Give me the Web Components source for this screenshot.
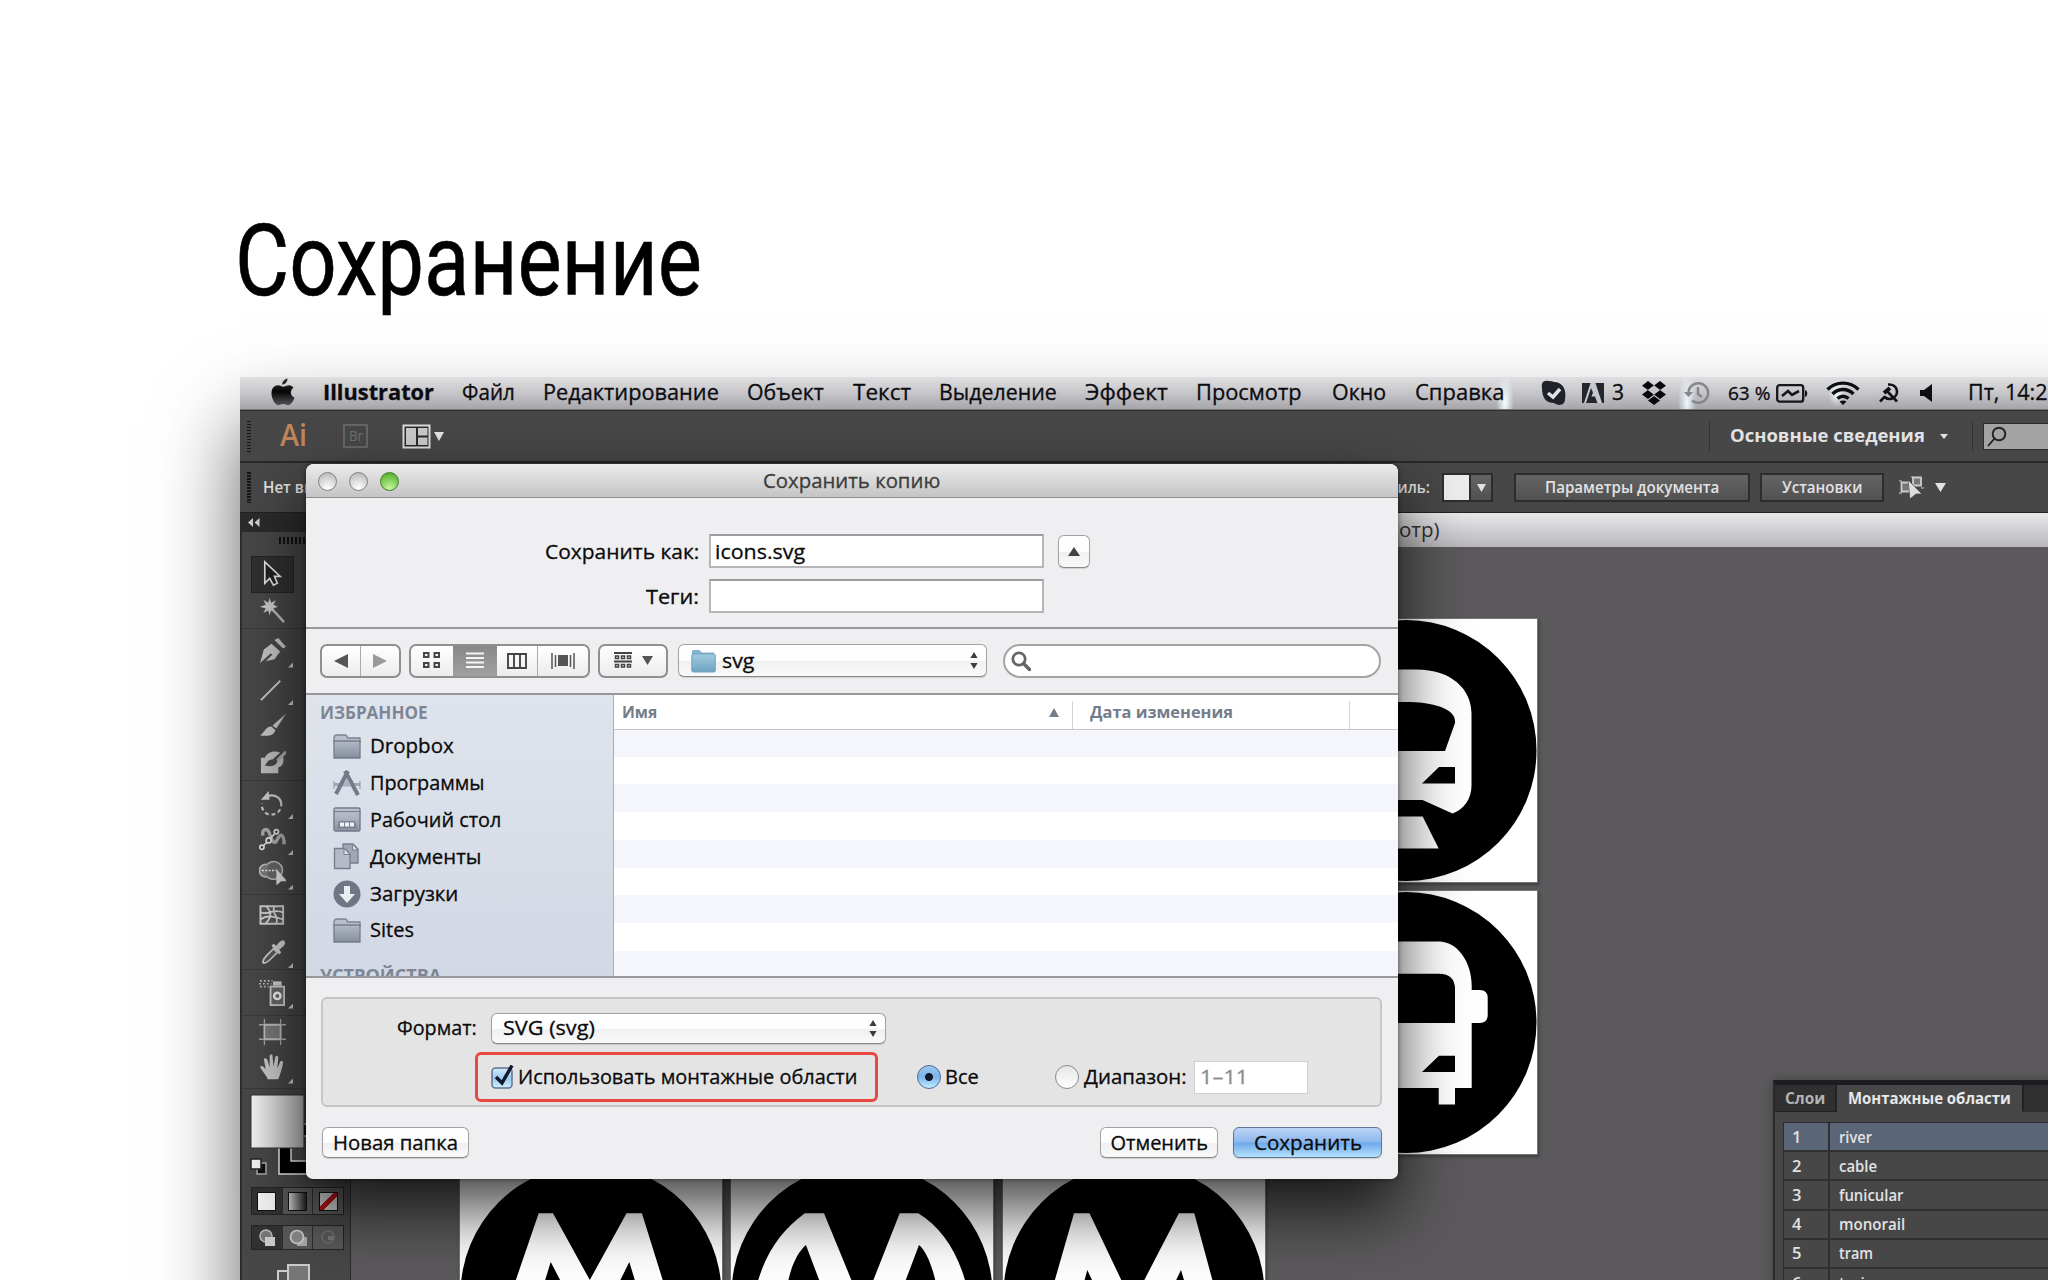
<!DOCTYPE html>
<html lang="ru">
<head>
<meta charset="utf-8">
<title>Сохранение</title>
<style>
  body {
    margin: 0;
    width: 2048px;
    height: 1280px;
    overflow: hidden;
    background: #fff;
    font-family: "Open Sans", "Noto Sans", sans-serif;
  }
</style>
</head>
<body>
<slide-page></slide-page>

<script>
const ICONS = {
  apple: [26, 28, `<defs><linearGradient id="g" x2="0" y2="1"><stop offset="0" stop-color="#333"/><stop offset=".5" stop-color="#050505"/><stop offset="1" stop-color="#555"/></linearGradient></defs><path fill="url(#g)" d="M17.5.5c.2 3-2.3 6-5.2 6.1C12 3.800 14.500 1 17.500.5ZM23.500 9.800c-4 2.600-3.300 8 1 9.900-1.500 4.200-4 7.500-6.300 7.500-1.800 0-2.600-1.100-4.800-1.100s-3.200 1.100-4.800 1.100C5.300 27.200 1.500 21 1.500 15.200c0-5 3.100-7.900 6.500-7.900 2.200 0 4 1.400 5.400 1.400 1.300 0 3.300-1.500 5.900-1.500 1.400 0 3.200.8 4.200 2.600Z"/>`],
  skype: [28, 26, `<path fill="#20222a" d="M8 1C3 0 1 4 2 8c0 10 4 15 12 15 4 3 11 3 11-4 2-10-3-17-11-17C12 1 10 1 8 1Z"/><path d="m8 13 5 4 7-8" fill="none" stroke="#dfe2e8" stroke-width="3.500"/>`],
  adobe: [22, 20, `<path fill="#24262c" d="M0 0h22v20H0z"/><path fill="#c6c8cd" d="M8.500 0h5L20 20h-4.500L13 13.500H9.500l1.500-4L9 5 4 20H2Z"/>`],
  dropbox: [26, 24, `<path fill="#08080c" d="m7 0 6 4.500L7 9 1 4.800ZM19 0l6 4.800L19 9l-6-4.500ZM7 9l6 4.500L7 18l-6-4.500ZM19 9l6 4.500-6 4.500-6-4.500ZM13 15l6 4.500-6 4.500-6-4.500Z"/><path fill="#c4c6cb" d="m13 4.500 6 4.500-6 4.500L7 9Z"/>`],
  clock: [26, 24, `<g fill="none" stroke="#85868c" stroke-width="2.500"><path d="M4.500 12A9.800 9.800 0 1 1 8 19.500"/><path d="M14 6v7l4 3"/></g><path fill="#85868c" d="M0 11h9l-4.500 5Z"/>`],
  battery: [32, 19, `<rect x="1.200" y="1.200" width="26" height="16.500" rx="2.500" fill="none" stroke="#15161a" stroke-width="2.300"/><path fill="#15161a" d="M29 6c3 .5 3 6.500 0 7Z"/><path d="m6 12 6-5 4 4 7-4" fill="none" stroke="#15161a" stroke-width="2.600"/>`],
  wifi: [34, 24, `<g fill="none" stroke="#0d0e12" stroke-width="3.400"><path d="M1.500 8.500c8.500-8.500 22.500-8.500 31 0"/><path d="M6.500 13c6-6 15-6 21 0"/><path d="M11.500 17.500c3.500-3 7.500-3 11 0"/></g><path fill="#0d0e12" d="m13.500 20.500c2-1.500 5-1.500 7 0L17 24Z"/>`],
  hammer: [21, 20, `<g fill="none" stroke="#111217" stroke-width="2.600"><path d="M9 1.500c10-1 12 11 4 14-3 1-6 0-8-2M1 18.500l5-5M7 7l11 11.500"/><path d="m5 10 6-5" stroke-width="4"/></g>`],
  speaker: [13, 18, `<path fill="#0d0e12" d="M0 6h4l8-6v18l-8-6H0Z"/>`],
  layout: [29, 25, `<path d="M1.500 1.500h26v22h-26z" fill="#2b2b2b" stroke="#dcdcdc" stroke-width="2"/><path fill="#c9c9c9" d="M4 4h10v17H4zM16 4h9.500v7.500H16zM16 13.500h9.500V21H16z"/>`],
  down: [12, 9, `<path fill="currentColor" d="M0 0h12L6 9Z"/>`],
  up: [12, 9, `<path fill="currentColor" d="M6 0l6 9H0Z"/>`],
  left: [14, 14, `<path fill="currentColor" d="M14 0v14L0 7Z"/>`],
  right: [14, 14, `<path fill="currentColor" d="M0 0v14l14-7Z"/>`],
  updown: [8, 17, `<path fill="#3c3c3c" d="m4 0 3.600 6H.4ZM.4 11h7.200L4 17Z"/>`],
  lens: [20, 21, `<circle cx="12" cy="8" r="6.300" fill="none" stroke="#222" stroke-width="1.900"/><path d="M7.500 12.500 1 20" stroke="#222" stroke-width="1.900"/>`],
  find: [20, 20, `<circle cx="8" cy="8" r="6.200" fill="none" stroke="#666" stroke-width="2.800"/><path d="m12.500 12.500 6 6" stroke="#666" stroke-width="3.600" stroke-linecap="round"/>`],
  align: [25, 23, `<path d="M2.500 6.500h8v9h-8zM14 1.500h8v8h-8z" fill="#777" stroke="#ccc" stroke-width="1.800"/><path d="M0 5h3M0 17h3M12 1h2M22 12h3" stroke="#ccc"/><path fill="#ddd" stroke="#444" stroke-width=".7" d="m9 4 14 14h-6l-6 5Z"/>`],
  collapse: [12, 9, `<path fill="#d0d0d0" d="M5 0v9L0 4.500ZM11.500 0v9l-5-4.500Z"/>`],
  grid: [18, 17, `<path d="M1 1h4.500v4H1zM11.500 1H16v4h-4.500zM1 11h4.500v4H1zM11.500 11H16v4h-4.500z" fill="none" stroke="#454545" stroke-width="2"/>`],
  list: [18, 17, `<path d="M0 1.500h18M0 6h18M0 10.500h18M0 15h18" stroke="#f4f4f4" stroke-width="1.800"/>`],
  columns: [20, 16, `<path d="M1 1h18v14H1zM7 1v14M13 1v14" fill="none" stroke="#444" stroke-width="1.900"/>`],
  flow: [24, 16, `<path d="M1 0v16M4.500 2v12M19.500 2v12M23 0v16" stroke="#555" stroke-width="1.500"/><path fill="#555" d="M7 2h10v11H7z"/>`],
  arrange: [19, 17, `<path d="M0 1h18M0 9.500h18" stroke="#444" stroke-width="1.900"/><path d="M1.500 4h3v2.500h-3zM7.500 4h3v2.500h-3zM13.500 4h3v2.500h-3zM1.500 12.500h3V15h-3zM7.500 12.500h3V15h-3zM13.500 12.500h3V15h-3z" fill="none" stroke="#444" stroke-width="1.500"/>`],
  blue: [25, 24, `<defs><linearGradient id="g" x2="0" y2="1"><stop offset="0" stop-color="#a3cbdf"/><stop offset="1" stop-color="#6ba3c3"/></linearGradient></defs><path fill="#83b4cf" d="M1 5V2.500Q1 1 2.500 1h6L11 3.500h12V8H1Z"/><rect x=".8" y="5" width="23.500" height="18" rx="1.500" fill="url(#g)" stroke="#6fa3bf"/>`],
  folder: [28, 25, `<defs><linearGradient id="g" x2="0" y2="1"><stop offset="0" stop-color="#b3bac6"/><stop offset="1" stop-color="#868e9c"/></linearGradient></defs><path fill="#b9c0cb" stroke="#7c8492" stroke-width="1.300" d="M1 6V3.500Q1.500 1 4 1h8q2 0 2.500 3H27v4H1Z"/><path fill="url(#g)" stroke="#747c8a" stroke-width="1.300" d="M1 7h26v17H1z"/>`],
  apps: [28, 28, `<path d="M1 14h26v3H1z" fill="#a0a7b4"/><path d="M1 12v8M27 12v8" stroke="#8e96a3"/><path d="M15 2 3 25M12 2l13 24" stroke="#727a88" stroke-width="4"/><path d="M9.500 17.500 14 9l4.500 8.500Z" fill="#aab0bc"/>`],
  desktop: [28, 25, `<defs><linearGradient id="g" x2="0" y2="1"><stop offset="0" stop-color="#c3c9d3"/><stop offset="1" stop-color="#8d95a3"/></linearGradient></defs><rect x="1" y="1" width="26" height="23" rx="1.500" fill="url(#g)" stroke="#727a88" stroke-width="1.400"/><path d="M1 4.500h26" stroke="#7c8492" stroke-width="1.300"/><path fill="#7b8391" d="M4 21.500 6 14h16l2 7.500Z"/><path fill="#edf0f4" d="M7 15.500h4v4H7zM12 15.500h4v4h-4zM17 15.500h4v4h-4z"/>`],
  docs: [26, 27, `<path fill="#a0a7b3" stroke="#777f8d" stroke-width="1.400" d="M10 1h10l5 5v14H10z"/><path fill="#d7dce4" stroke="#777f8d" d="M19.500 1v6H25Z"/><path fill="#b4bbc6" stroke="#777f8d" stroke-width="1.400" d="M1.500 5.500h10l5.500 5.500v14.500H1.500z"/><path fill="#e1e5eb" stroke="#777f8d" d="M11 5.500v6h6Z"/>`],
  download: [28, 28, `<circle cx="14" cy="14" r="13.500" fill="#6f7785"/><path fill="#eaedf2" d="M11 6h6v8h5l-8 9-8-9h5Z"/>`],
  arrow: [28, 32, `<path d="M6 3v22l5-5 4 7 4-2-3-7h6Z" fill="#222" stroke="#e4e4e4" stroke-width="1.700"/>`],
  wand: [28, 32, `<path fill="#c9c9c9" d="m11 3 1.500 5 5-2.500L15 10l4.500 2-4.500 2 2 4.500-4.500-2.500L11 21l-1.500-5-5 2.500L7 14 1 12l6-2-2.500-5 5 3Z"/><path d="m15 16 11 12" stroke="#bdbdbd" stroke-width="2.500"/>`],
  pen: [28, 32, `<path fill="#c4c4c4" d="m1 28 4-14 8-6 9 8-6 8-9 2 7-7-2-1-10 9ZM16 4l4-2 8 9-3 2Z"/>`],
  line: [28, 32, `<path d="M2 27 22 7" stroke="#c8c8c8" stroke-width="2"/>`],
  brush: [28, 32, `<path fill="#c6c6c6" d="M28 5 18 20l-4-3ZM13 18l4 4c-2 7-11 6-16 5 5-2 5-9 12-9Z"/>`],
  blob: [28, 32, `<path fill="#bdbdbd" d="M2 11h4c3-6 10-8 16-5l-8 7c-5 0-6 4-8 6 7 2 13 0 13-5l6-4c2 8-3 11-5 11v6H2Z"/><path d="m28 5-9 9" stroke="#aaa" stroke-width="3"/>`],
  rotate: [28, 32, `<path d="M8 9c9-4 16 2 15 10" fill="none" stroke="#c9c9c9" stroke-width="2.300"/><path d="M22 22c-5 9-20 7-19-6" fill="none" stroke="#c9c9c9" stroke-width="2.300" stroke-dasharray="4 3"/><path fill="#ccc" d="m2 12 8-9 1 9Z"/>`],
  width: [28, 32, `<path d="M4 12C3 4 9 4 11 10s5 13 8 6 7-6 7 5" fill="none" stroke="#aaa" stroke-width="3.500"/><path d="m3 24 8-8 7-8" stroke="#ddd" stroke-width="1.800"/><g fill="#444" stroke="#ddd" stroke-width="1.800"><circle cx="3" cy="24" r="2.200"/><circle cx="10" cy="17" r="2.600"/><circle cx="18" cy="8" r="2.200"/></g>`],
  shape: [28, 32, `<circle cx="7" cy="13" r="6.500" fill="#777" stroke="#bbb" stroke-width="1.700"/><path d="M9 6c8-6 17 1 15 9-3 8-11 8-15 5" fill="#666" stroke="#bbb" stroke-width="1.700"/><path d="M3 13h15" stroke="#eee" stroke-width="1.500" stroke-dasharray="2 1.500"/><path fill="#ddd" d="m18 11 11 13h-6l-5 4Z"/>`],
  mesh: [28, 32, `<path d="M1.500 6.500h23.500v18H1.500z" fill="#555" stroke="#ccc" stroke-width="2"/><path d="M2 13c8 3 13-5 23 0M2 20c7-6 15-2 23 0M8 7c6 6 4 12-1 17M16 7c-4 6 5 9 2 17" fill="none" stroke="#d8d8d8" stroke-width="1.700"/>`],
  dropper: [28, 32, `<path d="M4 26c0-5 7-9 11-14l4 4c-5 4-9 11-14 11Z" fill="#555" stroke="#c9c9c9" stroke-width="1.800"/><path fill="#ccc" d="m13 9 2-2 3 2c4-6 9-8 9-2-2 4-5 5-6 6l2 3-2 2Z"/>`],
  spray: [28, 32, `<path d="M12 10h14v19H12z" fill="#666" stroke="#ccc" stroke-width="1.900"/><path d="M15 9V5h8v4" fill="#ccc" stroke="#ccc"/><circle cx="19" cy="19.500" r="3.300" fill="none" stroke="#eee" stroke-width="2.600"/><path d="M1 4h13M0 7h13M1 10h9" stroke="#bbb" stroke-width="1.700" stroke-dasharray="2"/>`],
  artboard: [30, 32, `<path fill="#777" stroke="#bbb" stroke-width="2" d="M6 9h18v15H6z"/><path d="M6 3v5M24 3v5M6 25v5M24 25v5M0 9h5M25 9h5M0 24h5M25 24h5" stroke="#aaa" stroke-width="1.400"/>`],
  hand: [28, 32, `<path fill="#c8c8c8" d="M9 28c-1-4-6-8-8-13 3-2 5 2 6 3L5 7c2-2 4 1 4 2l2 7V4c1-2 3-2 3 0l1 11 2-10c1-2 3-1 3 1l-1 11 3-7c1-2 3-1 3 1-1 6-3 12-5 17Z"/>`]
};

// Значок из набора: <ui-icon name="apple" w h>
class UiIcon extends HTMLElement {
  connectedCallback() {
    const [vw, vh, body] = ICONS[this.getAttribute("name")];
    const w = this.getAttribute("w") || vw;
    const h = this.getAttribute("h") || vh;
    this.attachShadow({ mode: "open" }).innerHTML = `
      <style>
        :host { display: block; flex: none; width: ${w}px; height: ${h}px; }
        svg { display: block; }
      </style>
      <svg width="${w}" height="${h}" viewBox="0 0 ${vw} ${vh}" preserveAspectRatio="none">${body}</svg>
    `;
  }
}

// Строка текста, ужатая или растянутая до ширины w
class FitText extends HTMLElement {
  connectedCallback() {
    const w = Number(this.getAttribute("w"));
    const gap = this.getAttribute("gap") || 0;
    this.attachShadow({ mode: "open" }).innerHTML = `
      <style>
        :host {
          display: flex;
          flex: none;
          width: ${w}px;
          margin-left: ${gap}px;
          line-height: 1.2;
        }
        span { display: block; flex: none; white-space: pre; transform-origin: 0 50%; }
      </style>
      <span><slot></slot></span>
    `;
    const span = this.shadowRoot.querySelector("span");
    span.style.transform = `scaleX(${w / span.offsetWidth})`;
  }
}

class MenuBar extends HTMLElement {
  connectedCallback() {
    this.attachShadow({ mode: "open" }).innerHTML = `
      <style>
        :host {
          display: flex;
          align-items: center;
          flex: none;
          height: 33px;
          box-sizing: border-box;
          font-size: 21px;
          color: #0c0c10;
          -webkit-text-stroke: .3px;
          background:
            radial-gradient(ellipse 9px 30px at 1265px 26px, #f4ffff, transparent),
            radial-gradient(ellipse 9px 30px at 1447px 26px, #eef8fc, transparent),
            radial-gradient(ellipse 9px 14px at 1597px 16px, #eef8fc, transparent),
            linear-gradient(#dfdfe2, #c6c6ca 50%, #a5a5aa);
          border-bottom: 1px solid #77777c;
        }
        ui-icon { margin-left: var(--gap); }
      </style>
      <ui-icon name="apple" style="--gap:30px;margin-bottom:3px"></ui-icon>
      <fit-text w="111" gap="27" style="font-weight:700">Illustrator</fit-text>
      <fit-text w="53" gap="28">Файл</fit-text>
      <fit-text w="176" gap="28">Редактирование</fit-text>
      <fit-text w="77" gap="28">Объект</fit-text>
      <fit-text w="58" gap="29">Текст</fit-text>
      <fit-text w="118" gap="28">Выделение</fit-text>
      <fit-text w="83" gap="28">Эффект</fit-text>
      <fit-text w="106" gap="28">Просмотр</fit-text>
      <fit-text w="54" gap="30">Окно</fit-text>
      <fit-text w="89" gap="29">Справка</fit-text>
      <ui-icon name="skype" style="--gap:36px"></ui-icon>
      <ui-icon name="adobe" style="--gap:14px"></ui-icon>
      <fit-text w="12" gap="8">3</fit-text>
      <ui-icon name="dropbox" style="--gap:17px"></ui-icon>
      <ui-icon name="clock" style="--gap:17px"></ui-icon>
      <fit-text w="42" gap="18" style="font-size:19px">63 %</fit-text>
      <ui-icon name="battery" style="--gap:6px"></ui-icon>
      <ui-icon name="wifi" style="--gap:18px"></ui-icon>
      <ui-icon name="hammer" style="--gap:19px"></ui-icon>
      <ui-icon name="speaker" style="--gap:20px"></ui-icon>
      <fit-text w="80" gap="35">Пт, 14:2</fit-text>
    `;
  }
}

class AppBar extends HTMLElement {
  connectedCallback() {
    this.attachShadow({ mode: "open" }).innerHTML = `
      <style>
        :host {
          display: flex;
          align-items: center;
          flex: none;
          height: 53px;
          box-sizing: border-box;
          background: #474748;
          border-top: 1px solid #303031;
          border-bottom: 2px solid #29292a;
          color: #e2e2e2;
        }
        .grip {
          width: 4px;
          height: 31px;
          margin-left: 7px;
          background: repeating-linear-gradient(#161616 0 1.5px, #474748 1.5px 3px);
        }
        .br {
          display: flex;
          align-items: center;
          width: 25px;
          height: 24px;
          box-sizing: border-box;
          margin-left: 36px;
          border: 2px solid #666;
          color: #707070;
          font-size: 14px;
        }
        .sep { width: 1px; height: 31px; background: #343435; }
        .search {
          display: flex;
          align-items: center;
          width: 80px;
          height: 27px;
          margin-left: 10px;
          box-sizing: border-box;
          padding-left: 3px;
          border: 1px solid #2c2c2c;
          background: #a3a3a3;
        }
      </style>
      <div class="grip"></div>
      <fit-text w="27" gap="29" style="font-size:31px;font-weight:600;color:#c0855b;margin-top:-2px">Ai</fit-text>
      <div class="br"><fit-text w="14" gap="4">Br</fit-text></div>
      <ui-icon name="layout" style="margin-left:34px"></ui-icon>
      <ui-icon name="down" w="10" h="9" style="margin-left:3px"></ui-icon>
      <div class="sep" style="margin-left:1265px"></div>
      <fit-text w="195" gap="20" style="font-size:18px;font-weight:700">Основные сведения</fit-text>
      <ui-icon name="down" w="8" h="5" style="margin-left:15px"></ui-icon>
      <div class="sep" style="margin-left:24px"></div>
      <div class="search"><ui-icon name="lens"></ui-icon></div>
    `;
  }
}

class ControlBar extends HTMLElement {
  connectedCallback() {
    this.attachShadow({ mode: "open" }).innerHTML = `
      <style>
        :host {
          display: flex;
          align-items: center;
          flex: none;
          height: 50px;
          box-sizing: border-box;
          background: #474748;
          border-bottom: 1px solid #222;
          color: #e2e2e2;
          font-size: 16px;
          font-weight: 600;
        }
        .grip {
          width: 4px;
          height: 31px;
          margin-left: 7px;
          background: repeating-linear-gradient(#161616 0 1.5px, #474748 1.5px 3px);
        }
        .swatch, .button {
          display: flex;
          align-items: center;
          justify-content: center;
          box-sizing: border-box;
          height: 29px;
          border: 2px solid #2d2d2e;
          background: linear-gradient(#646465, #515152);
        }
        .swatch { width: 51px; margin-left: 12px; justify-content: flex-start; }
        .white { width: 25px; height: 25px; background: #ececee; border-right: 2px solid #2d2d2e; }
      </style>
      <div class="grip"></div>
      <fit-text w="53" gap="12">Нет вы</fit-text>
      <fit-text w="40" gap="1074">тиль:</fit-text>
      <div class="swatch"><div class="white"></div><ui-icon name="down" w="9" h="8" style="margin-left:6px"></ui-icon></div>
      <div class="button" style="width:236px;margin-left:21px"><fit-text w="174">Параметры документа</fit-text></div>
      <div class="button" style="width:124px;margin-left:10px"><fit-text w="80">Установки</fit-text></div>
      <ui-icon name="align" style="margin-left:15px"></ui-icon>
      <ui-icon name="down" w="11" h="9" style="margin-left:11px"></ui-icon>
    `;
  }
}

class ToolPanel extends HTMLElement {
  connectedCallback() {
    // [значок, высота ячейки, уголок вложенных инструментов, черта снизу]
    const tools = [
      ["arrow", 37, 0, 0], ["wand", 36, 0, 1], ["pen", 45, 1, 0], ["line", 30, 1, 0],
      ["brush", 40, 0, 0], ["blob", 37, 0, 1], ["rotate", 44, 1, 0], ["width", 28, 1, 0],
      ["shape", 42, 1, 1], ["mesh", 40, 0, 0], ["dropper", 35, 1, 1], ["spray", 46, 1, 1],
      ["artboard", 31, 0, 0], ["hand", 42, 1, 1]
    ];
    this.attachShadow({ mode: "open" }).innerHTML = `
      <style>
        :host {
          display: flex;
          flex-direction: column;
          flex: none;
          width: 111px;
          box-sizing: border-box;
          background: #474748;
          border-left: 2px solid #2c2c2d;
          border-right: 1px solid #2c2c2d;
        }
        :host > * { flex: none; }
        .head { height: 19px; padding: 5px 0 0 6px; box-sizing: border-box; background: #2b2b2c; }
        .grip { height: 7px; margin: 5px 30px 12px 37px; background: repeating-linear-gradient(90deg, #111 0 2px, #474748 2px 4px); }
        .tool { position: relative; display: flex; flex: none; align-items: center; padding-left: 17px; box-sizing: border-box; }
        .tool.arrow { width: 43px; height: 37px; margin-left: 9px; padding-left: 8px; background: #303031; box-shadow: inset 0 0 0 1px #242425; }
        .tool.line { border-bottom: 1px solid #3a3a3b; }
        .tool.more::after {
          content: "";
          position: absolute;
          left: 46px;
          bottom: calc(50% - 16px);
          width: 5px;
          height: 5px;
          clip-path: polygon(100% 0, 100% 100%, 0 100%);
          background: #ccc;
        }
        .head, .grip, .paint { flex: none; }
        .paint { display: block; margin: 5px 0 0 6px; }
        .cells { display: flex; flex: none; width: 93px; margin: 11px 0 0 9px; border: 1px solid #252526; box-sizing: border-box; }
        .cells div { flex: 1; display: flex; justify-content: center; align-items: center; height: 26px; border-right: 1px solid #2d2d2e; background: #59595a; }
        .cells div:first-child { background: #323233; }
        .cells div:last-child { border: 0; }
        .cells.low { margin-top: 10px; }
        .cells.low div { height: 23px; }
        i { width: 17px; height: 17px; border: 1px solid #101010; background: #f3f3f3; }
      </style>
      <div class="head"><ui-icon name="collapse"></ui-icon></div>
      <div class="grip"></div>
      ${tools.map(([name, h, more, line]) => `
        <div class="tool ${name === "line" ? "" : name} ${more ? "more" : ""} ${line ? "line" : ""}" style="height:${h}px">
          <ui-icon name="${name}" w="27" h="31"></ui-icon>
        </div>`).join("")}
      <svg class="paint" width="98" height="82" viewBox="0 0 98 82">
        <defs><linearGradient id="f"><stop stop-color="#f4f4f4"/><stop offset="1" stop-color="#b9b9b9"/></linearGradient></defs>
        <path d="M31 30h50v50H31z" fill="#000" stroke="#eee" stroke-width="1.500"/>
        <path d="M43 42h27v25H43z" fill="#4a4a4b" stroke="#eee" stroke-width="1.500"/>
        <path d="M3 1h53v53H3z" fill="url(#f)" stroke="#333"/>
        <path d="M9 69h9v11H9z" fill="#111" stroke="#aaa" stroke-width="1.500"/>
        <path d="M3 65h10v10H3z" fill="#f1f1f1" stroke="#222" stroke-width="1.500"/>
      </svg>
      <div class="cells">
        <div><i></i></div>
        <div><i style="background:linear-gradient(90deg,#ccc,#222)"></i></div>
        <div><i style="background:linear-gradient(135deg,#ccc 40%,#b31217 40% 60%,#ccc 60%)"></i></div>
      </div>
      <div class="cells low">
        <div><svg width="18" height="18"><circle cx="8" cy="7" r="6" fill="#777" stroke="#bbb" stroke-width="1.500"/><path fill="#ccc" d="M7 8h10v9H7z"/></svg></div>
        <div><svg width="18" height="18"><path fill="#aaa" d="M8 8h10v9H8z"/><circle cx="8" cy="8" r="6.500" fill="#888" stroke="#ccc" stroke-width="1.700"/></svg></div>
        <div><svg width="18" height="18"><circle cx="9" cy="8" r="6" fill="none" stroke="#707070" stroke-width="1.500"/><path fill="#777" d="M9 7h6v4H9z"/></svg></div>
      </div>
      <svg style="margin:14px 0 0 35px;flex:none" width="34" height="30"><path d="M1 7h20v22H1z" fill="#555" stroke="#ccc" stroke-width="2"/><path d="M11 1h21v28H11z" fill="#777" stroke="#ccc" stroke-width="2"/></svg>
    `;
  }
}

const SIGNS = {
  train: `<path fill="#fff" fill-rule="evenodd" d="M131 50.500h10c36 0 55.500 20 55.500 44v72c0 14-8 24-19 28l-30-13.500h-33l-30 13.500c-11-4-19-14-19-28v-72c0-24 19-44 55-44ZM131 83c-30 0-50 8-49 18l10 31h78l10-28c2-15-24-21-49-21ZM164 148h16v16.500h-33Z"/><path fill="#fff" d="M114 197.400h33.700l16 32h-66Z"/>`,
  bus: `<path fill="#fff" fill-rule="evenodd" d="M98 50.500h66c18 0 32.700 20 32.700 44V99h8q8 0 8 8v17q0 8-8 8h-8v65H180v16.500h-16.300V197H65V95c0-24 15-44.500 33-44.500ZM98 82.700q-16 0-16 15V132h98V98q0-15-16-15.300ZM164 164.800h16V181h-33Z"/>`,
  metroA: `<path fill="#fff" d="M78.700 50.300H93L129.800 117l36.700-66.700h15.400L208 134h-28l-10.700-35-17.300 35h-43L90.700 99 80 134H50Z"/>`,
  metroB: `<path fill="#fff" d="M73.800 50.300H93L120.400 117h22l26.300-66.700h18.600C210 64 228 90 236 125h-30c-4-20-10-36-18-43l-20 53H95L74.900 82C66 90 59 105 56 125H25C34 90 50 68 73.800 50.300Z"/>`,
  metroC: `<path fill="#fff" d="M71 50.300h15.500L118.300 117h23l34.600-66.700h15.400L214 134h-28l-8-27-13 27H97l-12.700-27L77 134H47Z"/>`
};

class ArtBoard extends HTMLElement {
  connectedCallback() {
    this.attachShadow({ mode: "open" }).innerHTML = `
      <style>
        :host { display: block; width: 262px; height: 263px; background: #fff; box-shadow: 0 0 0 1px #77757a, 1px 2px 3px 1px #3f3e40; }
        svg { display: block; }
      </style>
      <svg width="262" height="263"><circle cx="131" cy="131.500" r="130.500"/>${SIGNS[this.getAttribute("sign")]}</svg>
    `;
  }
}

class DocumentView extends HTMLElement {
  connectedCallback() {
    this.attachShadow({ mode: "open" }).innerHTML = `
      <style>
        :host { display: flex; flex-direction: column; flex: 1; background: #5b595b; }
        .title { display: flex; align-items: center; flex: none; height: 34px; box-sizing: border-box; background: linear-gradient(#e9e8ea, #b9b7ba); color: #333; font-size: 20px; }
        .boards { display: grid; grid-template-columns: repeat(4, 262px); grid-auto-rows: 263px; gap: 9px; column-gap: 9.700px; padding: 72px 0 0 108.500px; }
        .boards > :nth-child(1) { grid-area: 1 / 4; }
        .boards > :nth-child(2) { grid-area: 2 / 4; }
      </style>
      <div class="title"><fit-text w="41" gap="1048">отр)</fit-text></div>
      <div class="boards">
        <art-board sign="train"></art-board>
        <art-board sign="bus"></art-board>
        <art-board sign="metroA" style="grid-area:3/1"></art-board>
        <art-board sign="metroB" style="grid-area:3/2"></art-board>
        <art-board sign="metroC" style="grid-area:3/3"></art-board>
      </div>
    `;
  }
}

class BoardsPanel extends HTMLElement {
  connectedCallback() {
    const rows = [["river", 33], ["cable", 38], ["funicular", 65], ["monorail", 66], ["tram", 34], ["train", 35]];
    this.attachShadow({ mode: "open" }).innerHTML = `
      <style>
        :host {
          display: block;
          width: 285px;
          height: 210px;
          box-sizing: border-box;
          background: #474748;
          border: 2px solid #29292a;
          border-top: 5px solid #1e1c20;
          box-shadow: 0 0 10px #0004;
          font-size: 16.500px;
          color: #e2e2e2;
        }
        .tabs { display: flex; height: 27px; background: #303031; font-weight: 700; }
        .tab { display: flex; align-items: center; border-right: 2px solid #222; border-bottom: 1px solid #222; color: #b4b4b4; }
        .tab.on { background: #474748; color: #e8e8e8; border-bottom-color: #474748; }
        .table { margin: 10px 0 0 8px; border: 1px solid #2b2b2c; }
        .row { display: flex; align-items: center; height: 29.200px; box-sizing: border-box; border-bottom: 2px solid #303031; font-weight: 600; }
        .row.on { background: #5a6578; }
        .num { display: flex; align-items: center; width: 46px; height: 100%; box-sizing: border-box; border-right: 2px solid #303031; }
      </style>
      <div class="tabs">
        <div class="tab" style="width:60px"><fit-text w="40" gap="10">Слои</fit-text></div>
        <div class="tab on" style="width:185px"><fit-text w="163" gap="11">Монтажные области</fit-text></div>
      </div>
      <div class="table">
        ${rows.map(([name, w], i) => `
          <div class="row ${i ? "" : "on"}"><div class="num"><fit-text w="9" gap="8">${i + 1}</fit-text></div><fit-text w="${w}" gap="9">${name}</fit-text></div>`).join("")}
      </div>
    `;
  }
}

class MacButton extends HTMLElement {
  connectedCallback() {
    this.attachShadow({ mode: "open" }).innerHTML = `
      <style>
        :host {
          display: flex;
          align-items: center;
          justify-content: center;
          flex: none;
          height: 31px;
          box-sizing: border-box;
          border: 1.500px solid #a2a2a5;
          border-bottom-color: #88888b;
          border-radius: 6px;
          background: linear-gradient(#fff, #fdfdfd 50%, #f0f0f1 52%, #fafafa);
          box-shadow: 0 1px 1px #0002;
        }
        :host([primary]) {
          border-color: #5f7297;
          background: linear-gradient(#bdd5f4, #8db8ee 48%, #6ea8ea 52%, #b5e2fb);
        }
        :host([popup]) { justify-content: flex-start; }
        ui-icon { margin-left: auto; margin-right: 8px; }
      </style>
      <slot></slot>${this.hasAttribute("popup") ? `<ui-icon name="updown"></ui-icon>` : ""}
    `;
  }
}

class FileBrowser extends HTMLElement {
  connectedCallback() {
    const places = [
      ["folder", "Dropbox", 84], ["apps", "Программы", 115], ["desktop", "Рабочий стол", 131],
      ["docs", "Документы", 111], ["download", "Загрузки", 88], ["folder", "Sites", 44]
    ];
    this.attachShadow({ mode: "open" }).innerHTML = `
      <style>
        :host { display: flex; height: 285px; box-sizing: border-box; border-top: 2px solid #99999b; border-bottom: 2px solid #99999b; overflow: hidden; }
        aside { width: 308px; flex: none; box-sizing: border-box; border-right: 1.500px solid #a9adb5; background: linear-gradient(#dfe4ec, #d2d8e4); }
        .cap { padding: 7px 0 0 14px; font-size: 17.500px; font-weight: 700; color: #7c8694; -webkit-text-stroke: 0; }
        .place { display: flex; align-items: center; height: 36.800px; padding-left: 27px; }
        .place > :first-child { margin-right: 9px; }
        .place > [name="docs"] { margin-right: 11px; }
        .files { flex: 1; background: repeating-linear-gradient(#f4f6fb 0 27.700px, #fff 27.700px 55.400px) 0 34px; }
        .head { display: flex; align-items: center; height: 35px; box-sizing: border-box; border-bottom: 1.500px solid #c6c6c8; background: #fff; font-size: 16.500px; font-weight: 700; color: #747c8a; -webkit-text-stroke: 0; }
        .sep { width: 1px; height: 28px; background: #d4d4d8; align-self: flex-end; }
      </style>
      <aside>
        <div class="cap"><fit-text w="108">ИЗБРАННОЕ</fit-text></div>
        <div style="height:5px"></div>
        ${places.map(([icon, name, w]) => `
          <div class="place"><ui-icon name="${icon}"></ui-icon><fit-text w="${w}">${name}</fit-text></div>`).join("")}
        <div class="cap" style="padding-top:16px"><fit-text w="121">УСТРОЙСТВА</fit-text></div>
      </aside>
      <div class="files">
        <div class="head">
          <fit-text w="35" gap="8">Имя</fit-text>
          <ui-icon name="up" w="10" h="9" style="margin-left:392px"></ui-icon>
          <div class="sep" style="margin-left:13px"></div>
          <fit-text w="143" gap="17">Дата изменения</fit-text>
          <div class="sep" style="margin-left:116px"></div>
        </div>
      </div>
    `;
  }
}

class SaveDialog extends HTMLElement {
  connectedCallback() {
    this.attachShadow({ mode: "open" }).innerHTML = `
      <style>
        :host { display: block; width: 1092px; height: 715px; border-radius: 8px 8px 7px 7px; color: #0b0b0b; font-size: 20px; -webkit-text-stroke: .3px; }
        .frame { height: 100%; border-radius: inherit; overflow: hidden; background: #efeef0; }
        .bar { display: flex; align-items: center; height: 34px; box-sizing: border-box; padding-top: 1px; border-bottom: 1.500px solid #8e8e8e; background: linear-gradient(#ececec, #c4c4c6); color: #3c3c3c; }
        .light { width: 19px; height: 19px; box-sizing: border-box; border: 1.500px solid #828282; border-radius: 50%; margin-right: 12px; background: radial-gradient(circle at 50% 90%, #fff, #d2d2d4 60%, #b0b0b2); }
        .light.go { border-color: #427f2d; background: radial-gradient(circle at 50% 90%, #c9f5a0, #77c94d 60%, #4e9d31); }
        .fields { display: grid; grid-template-columns: 393px 335px 36px; column-gap: 10px; grid-auto-rows: 34px; row-gap: 11px; height: 129px; padding-top: 36px; box-sizing: border-box; align-items: center; justify-items: end; }
        .fields fit-text { padding-top: 2px; }
        .input { display: flex; align-items: center; width: 335px; height: 34px; box-sizing: border-box; border: 2px solid #b6b6b8; border-top-color: #9c9c9e; background: #fff; }
        .tools { display: flex; align-items: center; height: 66px; box-sizing: border-box; border-top: 2px solid #99999b; padding: 0 0 1px 14px; }
        .group { display: flex; height: 34px; box-sizing: border-box; border: 2px solid #8f8f92; border-radius: 7px; overflow: hidden; background: linear-gradient(#fff, #ececee); color: #555; }
        .group div { display: flex; align-items: center; justify-content: center; box-sizing: border-box; }
        .group .on { background: linear-gradient(#888, #a0a0a0); }
        .find { display: flex; align-items: center; width: 378px; height: 34px; box-sizing: border-box; margin-left: 16px; padding-left: 6px; border: 2px solid #a4a4a6; border-radius: 17px; background: #fff; }
        .box { width: 1061px; height: 110px; box-sizing: border-box; margin: 19px 0 0 15px; border: 2px solid #c6c6c8; border-radius: 6px; background: #e4e4e5; }
        .line { display: flex; align-items: center; }
        .red { display: flex; align-items: center; width: 403px; height: 50px; box-sizing: border-box; margin-left: 152px; padding-left: 13px; border: 3px solid #e8483f; border-radius: 6px; }
        .radio { width: 24px; height: 24px; box-sizing: border-box; border: 1.500px solid #8a8a8d; border-radius: 50%; background: linear-gradient(#e6e6e6, #fff); }
        .radio.on { border-color: #4c6a92; background: radial-gradient(circle, #101828 0 3.500px, transparent 4.500px), linear-gradient(#9cc6ee, #7cb5ee 50%, #c2ecff); }
        .footer { display: flex; align-items: center; padding: 20px 0 0 16px; }
      </style>
      <div class="frame">
      <div class="bar">
        <div class="light" style="margin-left:11.500px"></div><div class="light"></div><div class="light go"></div>
        <fit-text w="177" gap="352">Сохранить копию</fit-text>
      </div>
      <div class="fields">
        <fit-text w="154">Сохранить как:</fit-text>
        <div class="input"><fit-text w="90" gap="4">icons.svg</fit-text></div>
        <mac-button style="width:32px;height:33px;color:#444"><ui-icon name="up" w="12" h="9" style="margin:0"></ui-icon></mac-button>
        <fit-text w="53">Теги:</fit-text>
        <div class="input"></div>
      </div>
      <div class="tools">
        <div class="group">
          <div style="width:38px"><ui-icon name="left"></ui-icon></div>
          <div style="width:39px;border-left:1px solid #aaa;color:#999"><ui-icon name="right"></ui-icon></div>
        </div>
        <div class="group" style="margin-left:8px">
          <div style="width:42px"><ui-icon name="grid"></ui-icon></div>
          <div class="on" style="width:44px"><ui-icon name="list"></ui-icon></div>
          <div style="width:40px"><ui-icon name="columns"></ui-icon></div>
          <div style="width:51px;border-left:1px solid #aaa"><ui-icon name="flow"></ui-icon></div>
        </div>
        <div class="group" style="margin-left:8px">
          <div style="width:66px;gap:9px"><ui-icon name="arrange"></ui-icon><ui-icon name="down" w="11" h="9"></ui-icon></div>
        </div>
        <mac-button popup style="width:309px;height:33px;margin-left:10px">
          <ui-icon name="blue" style="margin:0 6px 0 12px"></ui-icon><fit-text w="32">svg</fit-text>
        </mac-button>
        <div class="find"><ui-icon name="find"></ui-icon></div>
      </div>
      <file-browser></file-browser>
      <div class="box">
        <div class="line" style="height:58px">
          <fit-text w="80" gap="74">Формат:</fit-text>
          <mac-button popup style="width:395px;margin-left:14px"><fit-text w="92" gap="11">SVG (svg)</fit-text></mac-button>
        </div>
        <div class="line" style="margin-top:-5px">
          <div class="red">
            <svg width="24" height="26" viewBox="0 0 24 26">
              <defs><linearGradient id="c" x2="0" y2="1"><stop stop-color="#d7eafa"/><stop offset=".5" stop-color="#9cc9ef"/><stop offset="1" stop-color="#cdf0ff"/></linearGradient></defs>
              <rect x="1" y="4" width="20" height="20" rx="3.500" fill="url(#c)" stroke="#60738f" stroke-width="1.500"/>
              <path d="m5 13 6 6L21 1.500" fill="none" stroke="#10182c" stroke-width="3.400"/>
            </svg>
            <fit-text w="339" gap="3">Использовать монтажные области</fit-text>
          </div>
          <div class="radio on" style="margin-left:39px"></div>
          <fit-text w="34" gap="4">Все</fit-text>
          <div class="radio" style="margin-left:76px"></div>
          <fit-text w="103" gap="5">Диапазон:</fit-text>
          <div class="input" style="width:114px;height:33px;margin-left:7px;border:1.500px solid #cfcfd1;color:#8b8b8d"><fit-text w="48" gap="5">1–11</fit-text></div>
        </div>
      </div>
      <div class="footer">
        <mac-button style="width:147px"><fit-text w="125">Новая папка</fit-text></mac-button>
        <mac-button style="width:118px;margin-left:631px"><fit-text w="97">Отменить</fit-text></mac-button>
        <mac-button primary style="width:149px;margin-left:15px"><fit-text w="108">Сохранить</fit-text></mac-button>
      </div>
      </div>
    `;
  }
}

class AppWindow extends HTMLElement {
  connectedCallback() {
    this.attachShadow({ mode: "open" }).innerHTML = `
      <style>
        :host {
          position: relative;
          display: block;
          width: 1900px;
          height: 1000px;
          box-shadow: 0 46px 76px rgba(0, 0, 0, .6);
        }
        .clip { overflow: hidden; height: 100%; display: flex; flex-direction: column; }
        .work { display: flex; flex: 1; min-height: 0; }
        save-dialog {
          position: absolute;
          z-index: 2;
          left: 66px;
          top: 87px;
          box-shadow: 0 30px 66px rgba(0, 0, 0, .75), 0 0 5px rgba(0, 0, 0, .5);
        }
        boards-panel { position: absolute; z-index: 1; left: 1533px; top: 703px; }
      </style>
      <div class="clip">
        <menu-bar></menu-bar>
        <app-bar></app-bar>
        <control-bar></control-bar>
        <div class="work">
          <tool-panel></tool-panel>
          <document-view></document-view>
        </div>
      </div>
      <boards-panel></boards-panel>
      <save-dialog></save-dialog>
    `;
  }
}

class SlidePage extends HTMLElement {
  connectedCallback() {
    this.attachShadow({ mode: "open" }).innerHTML = `
      <style>
        :host { display: block; width: 2048px; height: 1280px; box-sizing: border-box; padding: 200px 0 0 240px; overflow: hidden; }
        h1 { margin: 0; height: 177px; font: 400 101px Roboto, sans-serif; color: #000; -webkit-text-stroke: .6px; }
      </style>
      <h1><fit-text w="467" gap="-5">Сохранение</fit-text></h1>
      <app-window></app-window>
    `;
  }
}

customElements.define("ui-icon", UiIcon);
customElements.define("fit-text", FitText);
customElements.define("mac-button", MacButton);
customElements.define("menu-bar", MenuBar);
customElements.define("app-bar", AppBar);
customElements.define("control-bar", ControlBar);
customElements.define("tool-panel", ToolPanel);
customElements.define("art-board", ArtBoard);
customElements.define("document-view", DocumentView);
customElements.define("boards-panel", BoardsPanel);
customElements.define("file-browser", FileBrowser);
customElements.define("save-dialog", SaveDialog);
customElements.define("app-window", AppWindow);
customElements.define("slide-page", SlidePage);
</script>
</body>
</html>
